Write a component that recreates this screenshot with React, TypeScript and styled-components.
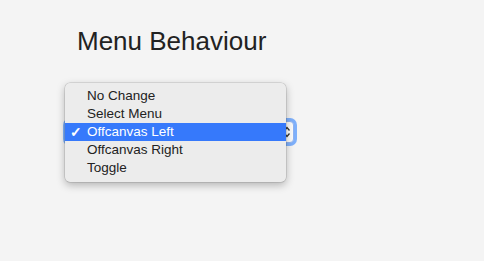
import React from "react";
import styled, { createGlobalStyle } from "styled-components";

const Global = createGlobalStyle`
  html, body {
    margin: 0;
    padding: 0;
    background: #f4f4f4;
    font-family: "Liberation Sans", Arial, sans-serif;
  }
`;

const Page = styled.div`
  box-sizing: border-box;
  min-height: 100vh;
  padding: 26px 0 0 66px;
`;

const Title = styled.h1`
  margin: 0 0 0 11px;
  font-size: 26px;
  line-height: 30px;
  font-weight: 400;
  color: #222;
`;

const Field = styled.div`
  position: relative;
  margin-top: 65px;
  width: 228px;
`;

const SelectBox = styled.div`
  height: 22px;
  box-sizing: border-box;
  border: 1px solid #8fb3f2;
  border-radius: 4px;
  background: #fbfbfb;
  box-shadow: 0 0 0 3px #7eb0fb;
  display: flex;
  align-items: center;
  justify-content: flex-end;
  padding-right: 3px;
`;

const Menu = styled.ul`
  position: absolute;
  left: -1px;
  top: -38px;
  width: 221px;
  margin: 0;
  padding: 4px 0 5px;
  list-style: none;
  background: #ececec;
  border-radius: 5px;
  box-shadow: 0 0 0 0.5px rgba(0, 0, 0, 0.18), 0 3px 9px rgba(0, 0, 0, 0.28);
  z-index: 2;
`;

const Item = styled.li<{ $active?: boolean }>`
  position: relative;
  height: 18px;
  line-height: 18px;
  padding-left: 22px;
  font-size: 13.5px;
  color: ${(p) => (p.$active ? "#fff" : "#222")};
  background: ${(p) => (p.$active ? "#3679fb" : "transparent")};
`;

const Check = styled.span`
  position: absolute;
  left: 5px;
  top: 0;
  font-size: 14px;
  font-weight: 700;
`;

const options = ["No Change", "Select Menu", "Offcanvas Left", "Offcanvas Right", "Toggle"];

export default function App() {
  return (
    <>
      <Global />
      <Page>
        <Title>Menu Behaviour</Title>
        <Field>
          <SelectBox>
            <svg width="6" height="12" viewBox="0 0 6 12">
              <path d="M0.5 4.5 L3 1.5 L5.5 4.5" fill="none" stroke="#333" strokeWidth="1.3" />
              <path d="M0.5 7.5 L3 10.5 L5.5 7.5" fill="none" stroke="#333" strokeWidth="1.3" />
            </svg>
          </SelectBox>
          <Menu>
            {options.map((o) => (
              <Item key={o} $active={o === "Offcanvas Left"}>
                {o === "Offcanvas Left" && <Check>✓</Check>}
                {o}
              </Item>
            ))}
          </Menu>
        </Field>
      </Page>
    </>
  );
}
